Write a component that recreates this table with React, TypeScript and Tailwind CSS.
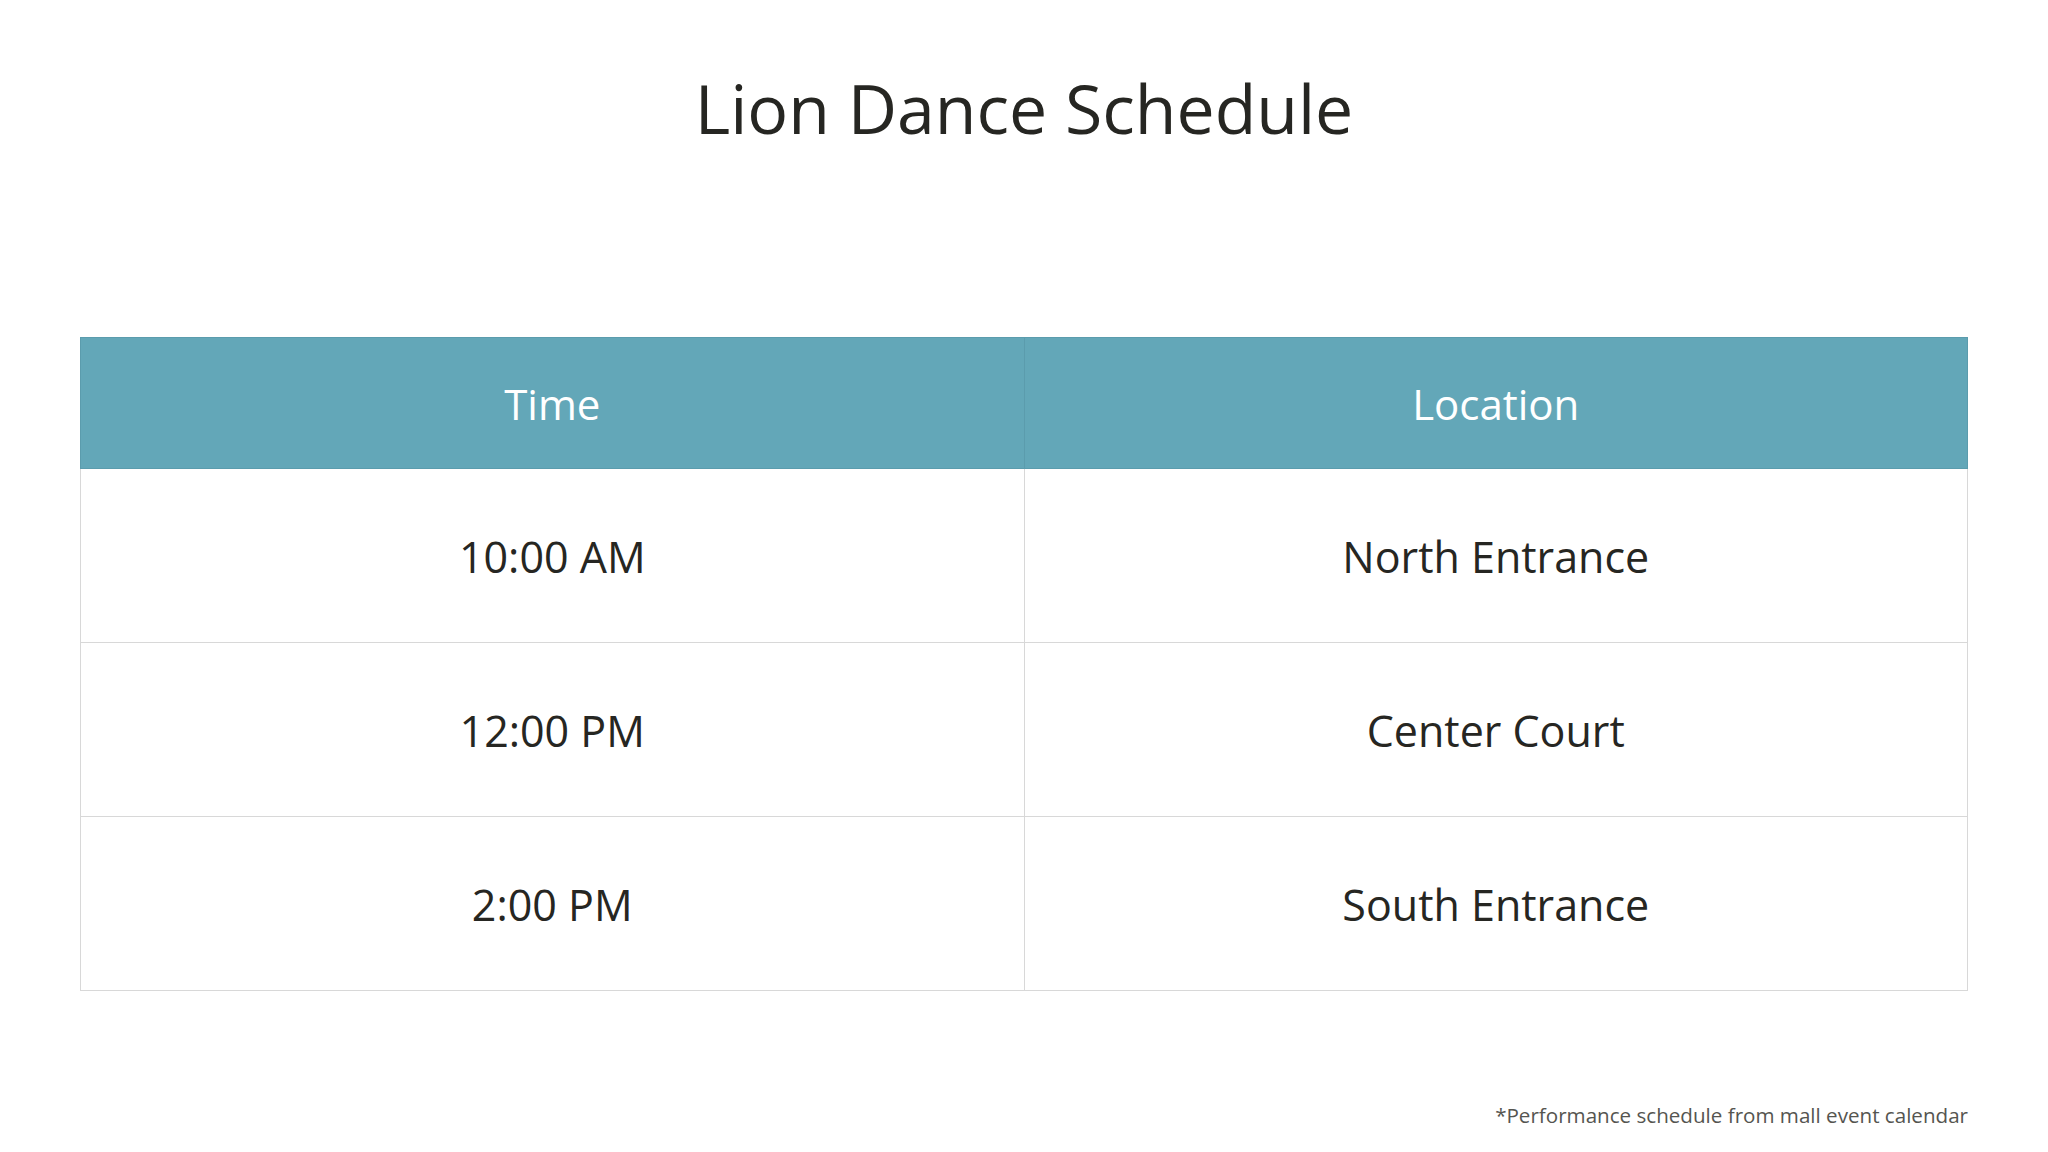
import React from "react"

const rows = [
  { time: "10:00 AM", location: "North Entrance" },
  { time: "12:00 PM", location: "Center Court" },
  { time: "2:00 PM", location: "South Entrance" },
]

export default function App() {
  return (
    <main
      className="w-[2048px] h-[1152px] bg-white px-[80px] flex flex-col text-[#262622]"
      style={{ fontFamily: '"Open Sans", "Noto Sans", sans-serif' }}
    >
      {/* 标题 */}
      <h1 className="mt-[67px] text-center text-[68px] leading-[82px] font-normal">
        Lion Dance Schedule
      </h1>

      {/* 表格 */}
      <table className="mt-[188px] w-full border-collapse table-fixed">
        <thead>
          <tr className="bg-[#63a7b8] text-white">
            <th className="h-[131px] border border-[#5b9cad] text-[42px] font-normal">Time</th>
            <th className="h-[131px] border border-[#5b9cad] text-[42px] font-normal">Location</th>
          </tr>
        </thead>
        <tbody>
          {rows.map((r) => (
            <tr key={r.time}>
              <td className="h-[174px] pt-[4px] border border-[#d8d8d8] text-center text-[43px]">{r.time}</td>
              <td className="h-[174px] pt-[4px] border border-[#d8d8d8] text-center text-[43px]">{r.location}</td>
            </tr>
          ))}
        </tbody>
      </table>

      {/* 脚注 */}
      <p className="mt-auto mb-[23px] text-right text-[20.6px] leading-[28px] text-[#555550]">
        *Performance schedule from mall event calendar
      </p>
    </main>
  )
}
